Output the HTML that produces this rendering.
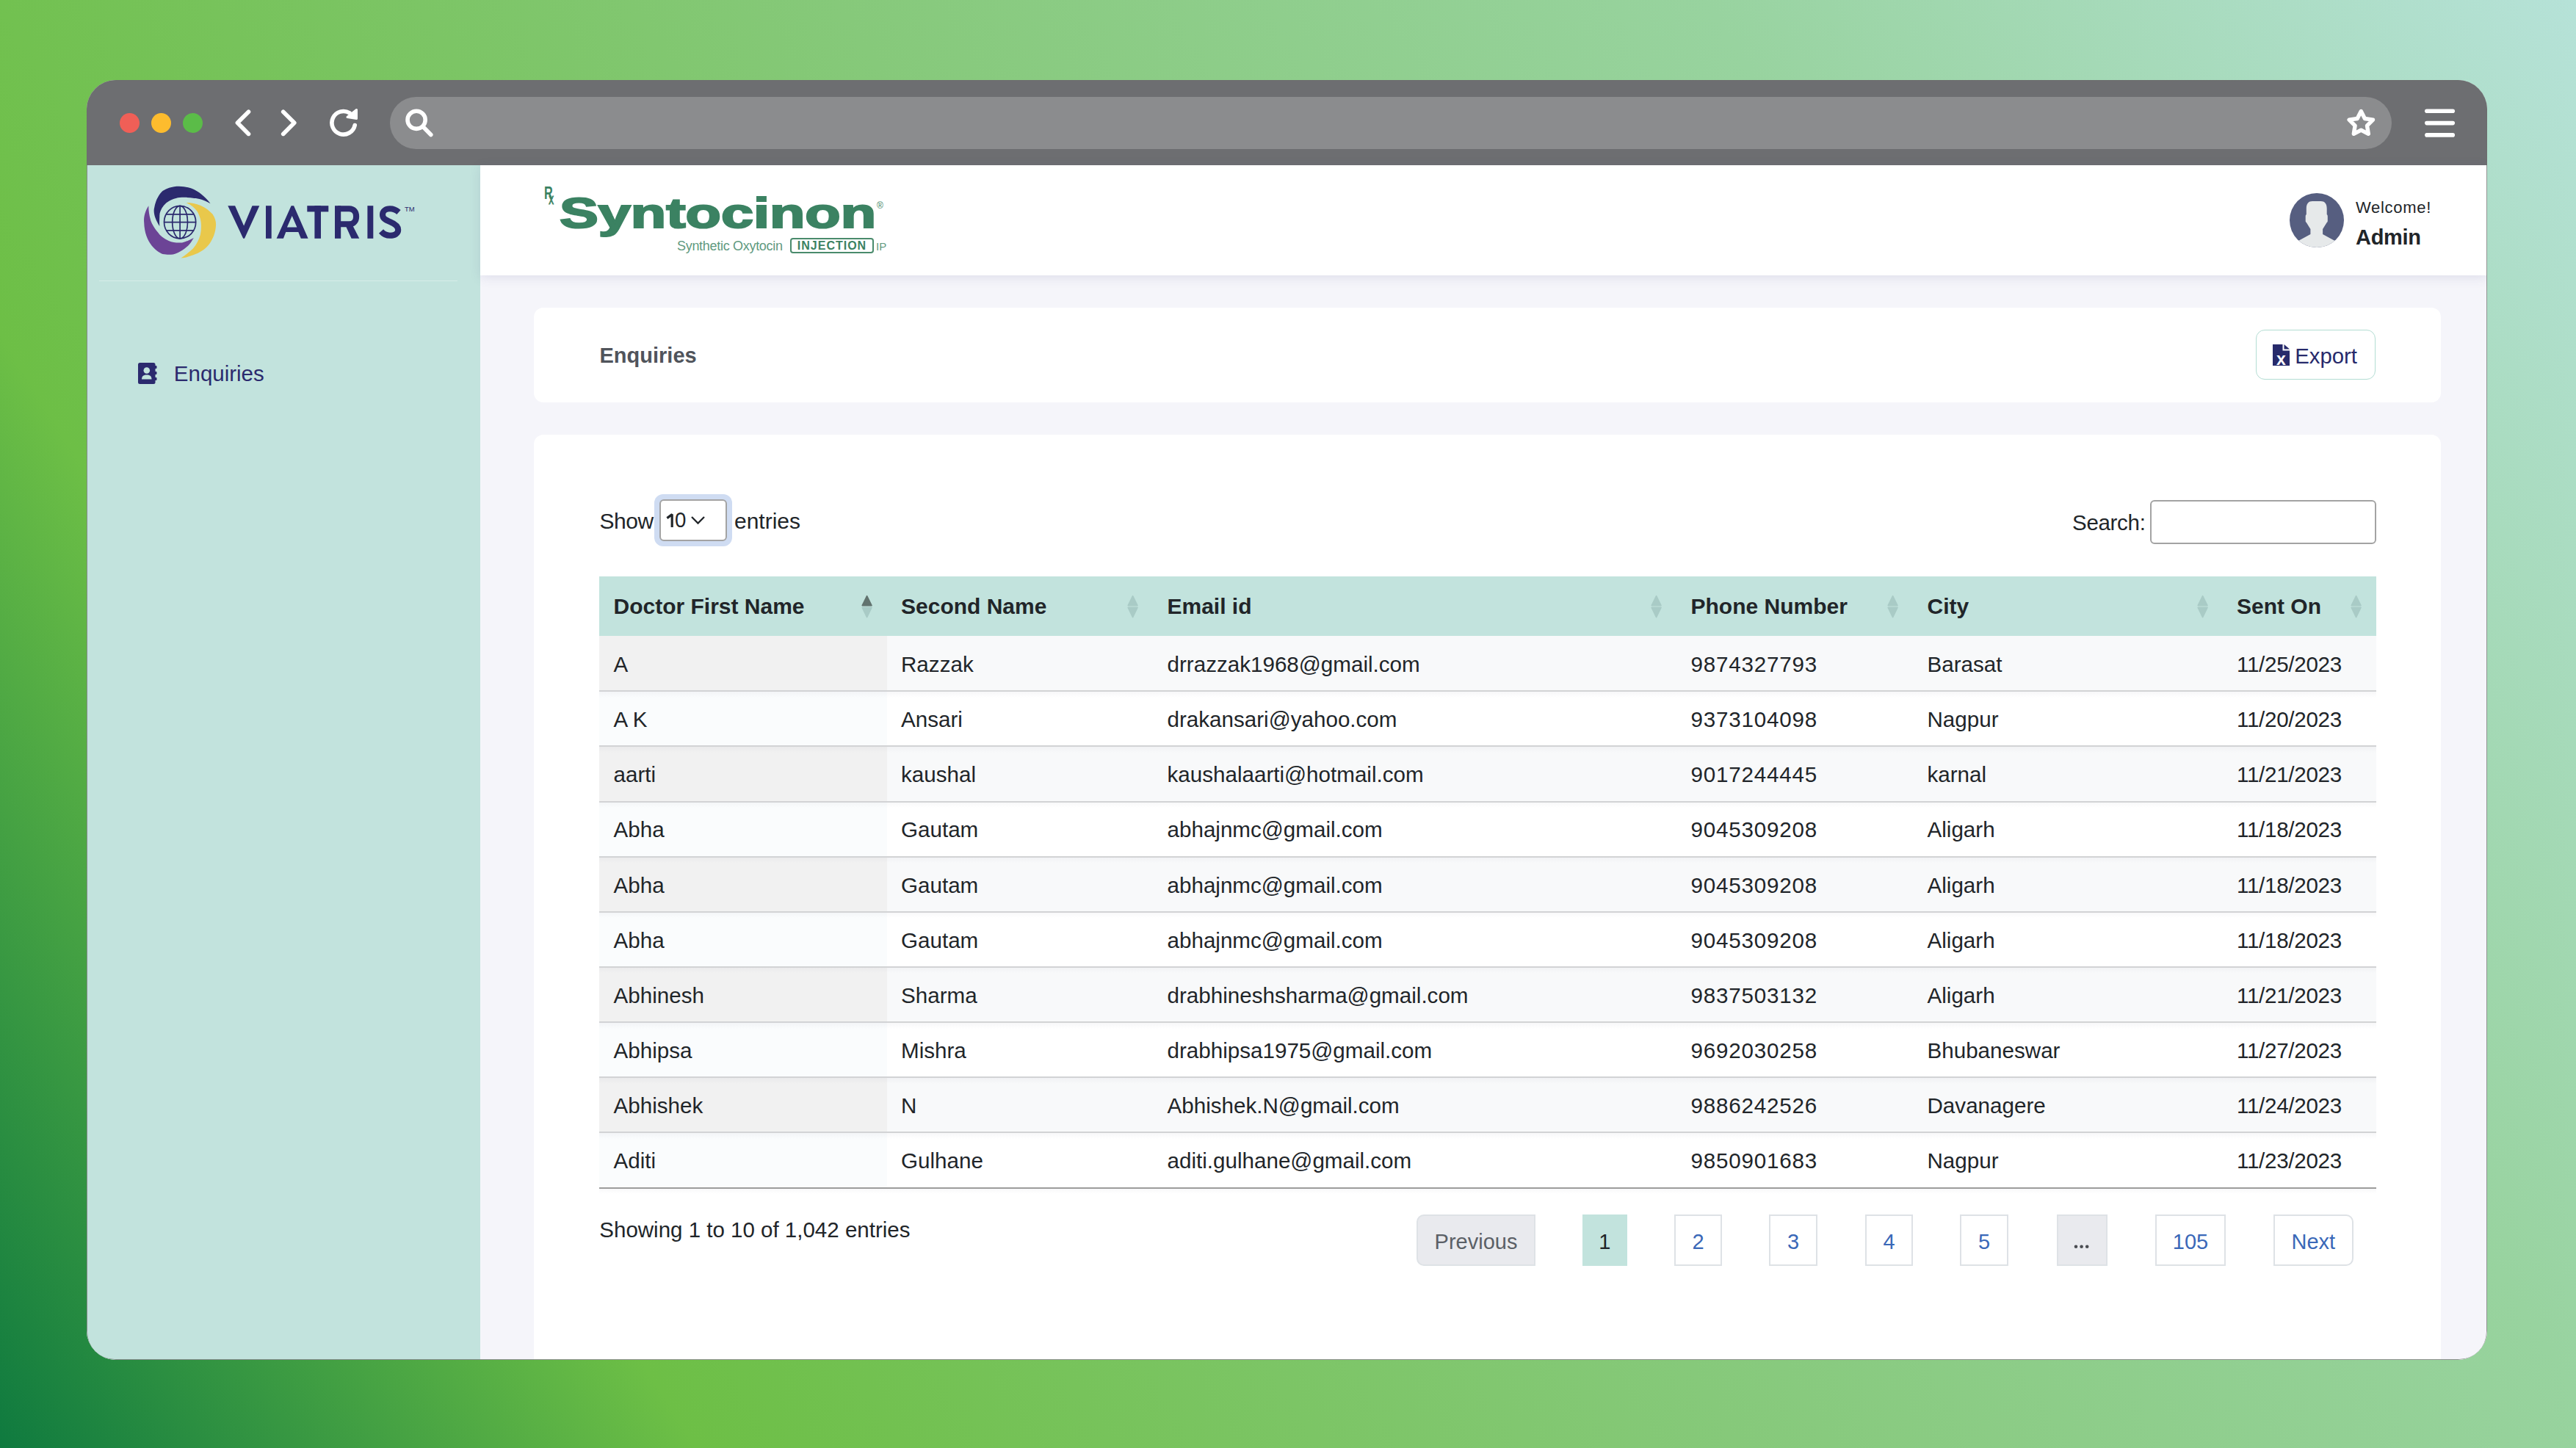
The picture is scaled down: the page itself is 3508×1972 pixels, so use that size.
<!DOCTYPE html>
<html><head><meta charset="utf-8"><style>
html,body{margin:0;padding:0;width:3508px;height:1972px;overflow:hidden}
body{background:linear-gradient(58deg,#0f7a3f 0%,#6dbf46 20%,#86c97a 50%,#98d39f 75%,#b6e2d8 100%);font-family:'Liberation Sans', sans-serif;position:relative}
.abs{position:absolute}
.t{position:absolute;white-space:nowrap}
#win{position:absolute;left:118px;top:109px;width:3269px;height:1743px;border-radius:40px;overflow:hidden;background:#f5f5fa}
#win > *{}
#bar{position:absolute;left:118px;top:109px;width:3269px;height:116px;background:#6d6e71}
.dot{position:absolute;width:27px;height:27px;border-radius:50%}

#inner{position:absolute;left:-118px;top:-109px;width:3508px;height:1972px}
#addr{position:absolute;left:531px;top:132px;width:2726px;height:71px;border-radius:36px;background:#8b8c8e}
#side{position:absolute;left:118px;top:225px;width:536px;height:1650px;background:#c2e3dd}
#main{position:absolute;left:654px;top:225px;width:2733px;height:1650px;background:#f5f5fa}
#hdr{position:absolute;left:654px;top:225px;width:2733px;height:150px;background:#fff;box-shadow:0 3px 14px rgba(80,80,140,0.13)}
.card{position:absolute;background:#fff;border-radius:13px}
#viatris{left:310px;top:270px;font-size:65px;line-height:65px;font-weight:700;color:#2a2a6a;letter-spacing:1px;transform-origin:0 0;transform:scaleX(0.925)}
#tm{left:550px;top:280px;font-size:11px;line-height:11px;font-weight:700;color:#2a2a6a}
#rx{left:741px;top:251px;font-size:24px;line-height:24px;font-weight:700;color:#3b8262;transform-origin:0 0;transform:scaleX(0.68)}
#rx span{font-size:20px;font-weight:400;-webkit-text-stroke:0.8px #3b8262;position:relative;left:-8px;top:7px}
#synto{left:762px;top:261px;font-size:58px;line-height:58px;font-weight:700;color:#3b8262;transform-origin:0 0;transform:scaleX(1.365);-webkit-text-stroke:2.2px #3b8262}
#reg{left:1194px;top:274px;font-size:12px;line-height:12px;color:#3b8262}
#synth{left:922px;top:326px;font-size:18px;line-height:18px;color:#5f9a80;letter-spacing:-0.3px}
#inj{left:1076px;top:324px;width:110px;height:17px;border:2px solid #4a8b6c;border-radius:4px;font-size:16px;line-height:17px;font-weight:700;color:#3b8262;text-align:center;letter-spacing:1px}
#ip{left:1193px;top:328px;font-size:15px;line-height:15px;color:#5f9a80}
#export{left:3072px;top:449px;width:161px;height:66px;border:1.5px solid #b3ddd3;border-radius:12px}
#selring{left:891px;top:673px;width:105.5px;height:71px;border-radius:12px;background:#cfdcf2}
#sel{left:898px;top:680.4px;width:88px;height:52.5px;border:2px solid #a3a3a3;border-radius:6px;background:#fff}
#search{left:2927.5px;top:680.5px;width:304px;height:56px;border:2px solid #a3a3a3;border-radius:6px;background:#fff}
.pg{position:absolute;top:1654px;height:66px;border:2px solid #dee2e6;background:#fff;color:#3a68b8;font-size:29px;line-height:66px;text-align:center;box-sizing:content-box}
.pg{box-sizing:border-box;height:70px;line-height:70px}
.pg.prev{background:#e9eaee;color:#5b6066;border-radius:10px 0 0 10px}
.pg.act{background:#c2e3dd;border-color:#c2e3dd;color:#212529}
.pg.dis{background:#e9eaee;color:#444}
.pg.next{border-radius:0 10px 10px 0}
</style></head><body>
<div id="win"><div id="inner">
<div id="bar"></div>
<div class="dot" style="left:162.5px;top:153.5px;background:#f05f57"></div>
<div class="dot" style="left:205.5px;top:153.5px;background:#fdbc2e"></div>
<div class="dot" style="left:248.5px;top:153.5px;background:#5bbc48"></div>
<div id="addr"></div>
<svg class="abs" style="left:0;top:0" width="3508" height="240"><g fill="none" stroke="#fff" stroke-width="5.6" stroke-linecap="round" stroke-linejoin="round"><polyline points="338.5,152.2 323.4,167.3 338.5,182.4"/><polyline points="385.7,152.2 400.8,167.3 385.7,182.4"/><path d="M483.2,170.6 A15.8,15.8 0 1 1 476.1,153.9"/><circle cx="567.1" cy="163.3" r="12.1"/><line x1="577.5" y1="174" x2="586.8" y2="183.5"/><path d="M3215.3,151.5 L3220.4,161.5 L3231.5,163.2 L3223.5,171.2 L3225.3,182.3 L3215.3,177.1 L3205.3,182.3 L3207.1,171.2 L3199.1,163.2 L3210.2,161.5 Z" stroke-width="5.4"/></g><g fill="#fff"><path d="M473,159.5 L485.5,149.5 L485.5,161.5 Z" stroke="#fff" stroke-width="3" stroke-linejoin="round"/><rect x="3302" y="148.5" width="41" height="5.6" rx="2.8"/><rect x="3302" y="164.8" width="41" height="5.6" rx="2.8"/><rect x="3302" y="181.1" width="41" height="5.6" rx="2.8"/></g></svg>
<div id="side"></div>
<svg class="abs" style="left:190px;top:245px" width="120" height="120" viewBox="0 0 120 120"><path fill="#2b2a6e" d="M27.3,63 C22,55 18,45 20.3,37.3 C22,27 27,19 31.5,14.9 C40,10 47,8.7 53.9,8.7 C63,9 70,11 74.6,13.3 C84,18 92,26 96.5,32.3 C88,27 80,24.9 74.6,24.9 C64,23.5 56,23.5 49.7,24.9 C42,27 37,30 33.1,34.8 C29,40 27,45 27.3,49.7 C27,55 27,59 27.3,63 Z"/><path fill="#6c4496" d="M12.4,35.2 C7,43 5.5,52 6.2,58 C6.5,72 11,82 16.6,89.5 C22,96 27,99 31.5,101.1 C37,102 41,102 45.6,101.5 C53,100 60,95 66.3,89.5 C70,86 72,82 73.8,79.1 C68,82 63,84.5 58,85.4 C51,86 45,85 39.8,82.9 C33,80 28,76 24.9,71.3 C19,64 16,58 14.9,53.9 C13,47 12.2,41 12.4,35.2 Z"/><path fill="#e9c84b" d="M63.4,31.1 C70,31 77,32.5 82.9,34.8 C90,38 95,42 99.4,46.4 C103,52 104.5,57 104,62.2 C103.5,72 100,80 95.3,87 C90,94 84,98 76.2,101.1 C70,104 62,106 56.4,106.5 C63,102 68,98 72.9,93.6 C78,88 81,81 82.9,74.6 C84,69 84.2,63 83.7,58 C83,52 81,47 78.7,43.1 C75,38 70,34 63.4,31.1 Z"/><g fill="none" stroke="#2b2a6e" stroke-width="1.7"><ellipse cx="55.1" cy="57.6" rx="21.6" ry="22.2"/><ellipse cx="55.1" cy="57.6" rx="10.4" ry="22.2"/><line x1="55.1" y1="35.4" x2="55.1" y2="79.8"/><line x1="34" y1="57.6" x2="76.5" y2="57.6"/><line x1="36" y1="46.8" x2="74.2" y2="46.8"/><line x1="36" y1="68.8" x2="74.2" y2="68.8"/></g></svg>
<svg class="abs" style="left:300px;top:265px" width="280" height="75" viewBox="0 0 280 75"><g fill="#2b2a6e"><polygon points="10.3,15.2 20.1,15.2 32.1,42.4 43.5,15.2 53.3,15.2 33,59.8 31.2,59.8"/><rect x="62" y="15.2" width="7.7" height="44.6"/><path fill-rule="evenodd" d="M96.6,15.2 L100.1,15.2 L119.6,59.8 L109.8,59.8 L106.3,51.1 L89.3,51.1 L85.9,59.8 L76.6,59.8 Z M90.9,44.6 L104.4,44.6 L97.7,29 Z"/><rect x="118.3" y="15.2" width="29" height="8.2"/><rect x="128.4" y="15.2" width="8.6" height="44.6"/><rect x="156" y="15.2" width="8.2" height="44.6"/><polygon points="170.5,42 180.2,42 189.3,59.8 178.6,59.8"/><rect x="200.4" y="15.2" width="7.9" height="44.6"/></g><g fill="none" stroke="#2b2a6e" stroke-width="8.1"><path d="M160,19.3 L175.5,19.3 C182,19.3 185.1,24 185.1,29.9 C185.1,35.8 181.5,40.3 175.5,40.3 L160,40.3"/><path d="M243,24 C239,20.5 235,19.3 231,19.3 C225,19.3 221,22.5 221,27.5 C221,33 226,35 231.5,37.2 C237.5,39.6 242.2,42.3 242.2,48 C242.2,53 237.5,55.8 231,55.8 C226,55.8 222,53.5 219,50"/></g><text x="251" y="23" font-family="Liberation Sans" font-size="9.5" fill="#2b2a6e">TM</text></svg>
<div class="abs" style="left:135px;top:381.5px;width:488px;height:1.5px;background:#d6ede8"></div>
<svg class="abs" style="left:187px;top:493px" width="28" height="31" viewBox="0 0 28 31"><rect x="1" y="1" width="23.5" height="29" rx="2.5" fill="#2b2a6e"/><rect x="23" y="5" width="3.5" height="4" rx="1" fill="#2b2a6e"/><rect x="23" y="13" width="3.5" height="4" rx="1" fill="#2b2a6e"/><rect x="23" y="21" width="3.5" height="4" rx="1" fill="#2b2a6e"/><circle cx="12.8" cy="11.5" r="4.3" fill="#c2e3dd"/><path d="M6,23.5 C6,19 9,17.5 12.8,17.5 C16.5,17.5 19.5,19 19.5,23.5 Z" fill="#c2e3dd"/></svg>
<div class="t" style="left:236.8px;top:494.2px;font-size:29.5px;line-height:29.5px;font-weight:400;color:#2b2a6e;">Enquiries</div>
<div id="main"></div>
<div id="hdr"></div>
<div class="t" id="rx">R<span>x</span></div>
<div class="t" id="synto">Syntocinon</div>
<div class="t" id="reg">&reg;</div>
<div class="t" id="synth">Synthetic Oxytocin</div>
<div class="abs" id="inj">INJECTION</div>
<div class="t" id="ip">IP</div>
<svg class="abs" style="left:3118px;top:263px" width="74" height="74" viewBox="0 0 74 74"><defs><clipPath id="cc"><circle cx="37" cy="37" r="37"/></clipPath></defs><circle cx="37" cy="37" r="37" fill="#565e80"/><g clip-path="url(#cc)" fill="#e6e9ea"><path d="M22.8,21 C22.8,14 26,11 31,11 L42.5,11 C47.5,11 50.7,14 50.7,21 L50.7,29.3 C51.5,29.5 51.8,30.5 51.8,32 L51.8,38 C51.8,39.2 51,39.9 50.7,39.9 L45.1,48.9 L45.1,56 L59.8,64 L74,71 L74,74 L0,74 L0,71 L13.7,64 L28.4,56 L28.4,48.9 L22.8,39.9 C22.5,39.9 21.7,39.2 21.7,38 L21.7,32 C21.7,30.5 22,29.5 22.8,29.3 Z"/></g></svg>
<div class="t" style="left:3208.0px;top:271.9px;font-size:22px;line-height:22px;font-weight:400;color:#212529;letter-spacing:0.7px">Welcome!</div>
<div class="t" style="left:3208.0px;top:308.5px;font-size:29px;line-height:29px;font-weight:700;color:#212529;letter-spacing:-0.3px">Admin</div>
<div class="card" style="left:727px;top:419px;width:2597px;height:129px"></div>
<div class="t" style="left:816.5px;top:470.4px;font-size:29px;line-height:29px;font-weight:700;color:#50545b;">Enquiries</div>
<div class="abs" id="export"></div>
<svg class="abs" style="left:3095px;top:469px" width="24" height="30" viewBox="0 0 24 30"><path d="M0,0 L13.5,0 L13.5,8.5 L23,8.5 L23,29 L0,29 Z" fill="#272a6b"/><path d="M15.5,0 L23,6.5 L15.5,6.5 Z" fill="#272a6b"/><text x="11.5" y="27.5" font-family="Liberation Sans" font-weight="700" font-size="23" fill="#fff" text-anchor="middle">x</text></svg>
<div class="t" style="left:3125.3px;top:470.4px;font-size:29.3px;line-height:29.3px;font-weight:400;color:#272a6b;">Export</div>
<div class="card" style="left:727px;top:592px;width:2597px;height:1400px"></div>
<div class="t" style="left:816.5px;top:694.6px;font-size:30px;line-height:30px;font-weight:400;color:#212529;letter-spacing:-0.5px">Show</div>
<div class="abs" id="selring"></div>
<div class="abs" id="sel"></div>
<svg class="abs" style="left:905px;top:695px" width="16" height="28"><path d="M3.4,10.6 L10.2,5.6 L10.2,23.1" fill="none" stroke="#212529" stroke-width="3.2" stroke-linejoin="bevel"/></svg>
<div class="t" style="left:918.5px;top:692.9px;font-size:30px;line-height:30px;font-weight:400;color:#212529;transform:scaleX(0.92);transform-origin:0 0">0</div>
<svg class="abs" style="left:938px;top:700px" width="26" height="18"><polyline points="4,4 12.5,12.5 21,4" fill="none" stroke="#212529" stroke-width="2.3"/></svg>
<div class="t" style="left:1000.0px;top:694.6px;font-size:30px;line-height:30px;font-weight:400;color:#212529;">entries</div>
<div class="t" style="left:2822.0px;top:697.0px;font-size:29.5px;line-height:29.5px;font-weight:400;color:#212529;letter-spacing:-0.3px">Search:</div>
<div class="abs" id="search"></div>
<div class="abs" style="left:816px;top:785px;width:2420.0px;height:81px;background:#c2e3dd"></div>
<div class="t" style="left:835.5px;top:811.0px;font-size:30px;line-height:30px;font-weight:700;color:#212529;">Doctor First Name</div>
<svg class="abs" style="left:1172.8px;top:810px" width="16" height="33" viewBox="0 0 16 33"><path d="M7.6,1.6 L14,14.6 L1.2,14.6 Z" fill="#62736f" stroke="#62736f" stroke-width="1.6" stroke-linejoin="round"/><path d="M1.2,17.4 L14,17.4 L7.6,30.6 Z" fill="#a9cbc6" stroke="#a9cbc6" stroke-width="1.6" stroke-linejoin="round"/></svg>
<div class="t" style="left:1227.0px;top:811.0px;font-size:30px;line-height:30px;font-weight:700;color:#212529;">Second Name</div>
<svg class="abs" style="left:1535.3px;top:810px" width="16" height="33" viewBox="0 0 16 33"><path d="M7.6,1.6 L14,14.6 L1.2,14.6 Z" fill="#a9cbc6" stroke="#a9cbc6" stroke-width="1.6" stroke-linejoin="round"/><path d="M1.2,17.4 L14,17.4 L7.6,30.6 Z" fill="#a9cbc6" stroke="#a9cbc6" stroke-width="1.6" stroke-linejoin="round"/></svg>
<div class="t" style="left:1589.5px;top:811.0px;font-size:30px;line-height:30px;font-weight:700;color:#212529;">Email id</div>
<svg class="abs" style="left:2248.3px;top:810px" width="16" height="33" viewBox="0 0 16 33"><path d="M7.6,1.6 L14,14.6 L1.2,14.6 Z" fill="#a9cbc6" stroke="#a9cbc6" stroke-width="1.6" stroke-linejoin="round"/><path d="M1.2,17.4 L14,17.4 L7.6,30.6 Z" fill="#a9cbc6" stroke="#a9cbc6" stroke-width="1.6" stroke-linejoin="round"/></svg>
<div class="t" style="left:2302.5px;top:811.0px;font-size:30px;line-height:30px;font-weight:700;color:#212529;">Phone Number</div>
<svg class="abs" style="left:2570.3px;top:810px" width="16" height="33" viewBox="0 0 16 33"><path d="M7.6,1.6 L14,14.6 L1.2,14.6 Z" fill="#a9cbc6" stroke="#a9cbc6" stroke-width="1.6" stroke-linejoin="round"/><path d="M1.2,17.4 L14,17.4 L7.6,30.6 Z" fill="#a9cbc6" stroke="#a9cbc6" stroke-width="1.6" stroke-linejoin="round"/></svg>
<div class="t" style="left:2624.5px;top:811.0px;font-size:30px;line-height:30px;font-weight:700;color:#212529;">City</div>
<svg class="abs" style="left:2991.8px;top:810px" width="16" height="33" viewBox="0 0 16 33"><path d="M7.6,1.6 L14,14.6 L1.2,14.6 Z" fill="#a9cbc6" stroke="#a9cbc6" stroke-width="1.6" stroke-linejoin="round"/><path d="M1.2,17.4 L14,17.4 L7.6,30.6 Z" fill="#a9cbc6" stroke="#a9cbc6" stroke-width="1.6" stroke-linejoin="round"/></svg>
<div class="t" style="left:3046.0px;top:811.0px;font-size:30px;line-height:30px;font-weight:700;color:#212529;">Sent On</div>
<svg class="abs" style="left:3201.3px;top:810px" width="16" height="33" viewBox="0 0 16 33"><path d="M7.6,1.6 L14,14.6 L1.2,14.6 Z" fill="#a9cbc6" stroke="#a9cbc6" stroke-width="1.6" stroke-linejoin="round"/><path d="M1.2,17.4 L14,17.4 L7.6,30.6 Z" fill="#a9cbc6" stroke="#a9cbc6" stroke-width="1.6" stroke-linejoin="round"/></svg>
<div class="abs" style="left:816px;top:866.0px;width:2420.0px;height:75.2px;background:#f8f9fa"></div>
<div class="abs" style="left:816px;top:866.0px;width:391.5px;height:75.2px;background:#f1f1f1"></div>
<div class="abs" style="left:816px;top:941.1px;width:2420.0px;height:75.2px;background:#ffffff"></div>
<div class="abs" style="left:816px;top:941.1px;width:391.5px;height:75.2px;background:#fafcfd"></div>
<div class="abs" style="left:816px;top:1016.3px;width:2420.0px;height:75.2px;background:#f8f9fa"></div>
<div class="abs" style="left:816px;top:1016.3px;width:391.5px;height:75.2px;background:#f1f1f1"></div>
<div class="abs" style="left:816px;top:1091.5px;width:2420.0px;height:75.2px;background:#ffffff"></div>
<div class="abs" style="left:816px;top:1091.5px;width:391.5px;height:75.2px;background:#fafcfd"></div>
<div class="abs" style="left:816px;top:1166.6px;width:2420.0px;height:75.2px;background:#f8f9fa"></div>
<div class="abs" style="left:816px;top:1166.6px;width:391.5px;height:75.2px;background:#f1f1f1"></div>
<div class="abs" style="left:816px;top:1241.8px;width:2420.0px;height:75.2px;background:#ffffff"></div>
<div class="abs" style="left:816px;top:1241.8px;width:391.5px;height:75.2px;background:#fafcfd"></div>
<div class="abs" style="left:816px;top:1316.9px;width:2420.0px;height:75.2px;background:#f8f9fa"></div>
<div class="abs" style="left:816px;top:1316.9px;width:391.5px;height:75.2px;background:#f1f1f1"></div>
<div class="abs" style="left:816px;top:1392.1px;width:2420.0px;height:75.2px;background:#ffffff"></div>
<div class="abs" style="left:816px;top:1392.1px;width:391.5px;height:75.2px;background:#fafcfd"></div>
<div class="abs" style="left:816px;top:1467.2px;width:2420.0px;height:75.2px;background:#f8f9fa"></div>
<div class="abs" style="left:816px;top:1467.2px;width:391.5px;height:75.2px;background:#f1f1f1"></div>
<div class="abs" style="left:816px;top:1542.3px;width:2420.0px;height:75.2px;background:#ffffff"></div>
<div class="abs" style="left:816px;top:1542.3px;width:391.5px;height:75.2px;background:#fafcfd"></div>
<div class="abs" style="left:816px;top:941.6px;width:2420.0px;height:8px;background:linear-gradient(rgba(40,40,80,0.035),rgba(40,40,80,0))"></div>
<div class="abs" style="left:816px;top:940.1px;width:2420.0px;height:2px;background:#d2d3d5"></div>
<div class="t" style="left:835.5px;top:889.9px;font-size:29.6px;line-height:29.6px;font-weight:400;color:#212529;">A</div>
<div class="t" style="left:1227.0px;top:889.9px;font-size:29.6px;line-height:29.6px;font-weight:400;color:#212529;">Razzak</div>
<div class="t" style="left:1589.5px;top:889.9px;font-size:29.6px;line-height:29.6px;font-weight:400;color:#212529;">drrazzak1968@gmail.com</div>
<div class="t" style="left:2302.5px;top:889.9px;font-size:29.6px;line-height:29.6px;font-weight:400;color:#212529;letter-spacing:0.8px">9874327793</div>
<div class="t" style="left:2624.5px;top:889.9px;font-size:29.6px;line-height:29.6px;font-weight:400;color:#212529;">Barasat</div>
<div class="t" style="left:3046.0px;top:889.9px;font-size:29.6px;line-height:29.6px;font-weight:400;color:#212529;letter-spacing:-0.3px">11/25/2023</div>
<div class="abs" style="left:816px;top:1016.8px;width:2420.0px;height:8px;background:linear-gradient(rgba(40,40,80,0.035),rgba(40,40,80,0))"></div>
<div class="abs" style="left:816px;top:1015.3px;width:2420.0px;height:2px;background:#d2d3d5"></div>
<div class="t" style="left:835.5px;top:965.1px;font-size:29.6px;line-height:29.6px;font-weight:400;color:#212529;">A K</div>
<div class="t" style="left:1227.0px;top:965.1px;font-size:29.6px;line-height:29.6px;font-weight:400;color:#212529;">Ansari</div>
<div class="t" style="left:1589.5px;top:965.1px;font-size:29.6px;line-height:29.6px;font-weight:400;color:#212529;">drakansari@yahoo.com</div>
<div class="t" style="left:2302.5px;top:965.1px;font-size:29.6px;line-height:29.6px;font-weight:400;color:#212529;letter-spacing:0.8px">9373104098</div>
<div class="t" style="left:2624.5px;top:965.1px;font-size:29.6px;line-height:29.6px;font-weight:400;color:#212529;">Nagpur</div>
<div class="t" style="left:3046.0px;top:965.1px;font-size:29.6px;line-height:29.6px;font-weight:400;color:#212529;letter-spacing:-0.3px">11/20/2023</div>
<div class="abs" style="left:816px;top:1092.0px;width:2420.0px;height:8px;background:linear-gradient(rgba(40,40,80,0.035),rgba(40,40,80,0))"></div>
<div class="abs" style="left:816px;top:1090.5px;width:2420.0px;height:2px;background:#d2d3d5"></div>
<div class="t" style="left:835.5px;top:1040.2px;font-size:29.6px;line-height:29.6px;font-weight:400;color:#212529;">aarti</div>
<div class="t" style="left:1227.0px;top:1040.2px;font-size:29.6px;line-height:29.6px;font-weight:400;color:#212529;">kaushal</div>
<div class="t" style="left:1589.5px;top:1040.2px;font-size:29.6px;line-height:29.6px;font-weight:400;color:#212529;">kaushalaarti@hotmail.com</div>
<div class="t" style="left:2302.5px;top:1040.2px;font-size:29.6px;line-height:29.6px;font-weight:400;color:#212529;letter-spacing:0.8px">9017244445</div>
<div class="t" style="left:2624.5px;top:1040.2px;font-size:29.6px;line-height:29.6px;font-weight:400;color:#212529;">karnal</div>
<div class="t" style="left:3046.0px;top:1040.2px;font-size:29.6px;line-height:29.6px;font-weight:400;color:#212529;letter-spacing:-0.3px">11/21/2023</div>
<div class="abs" style="left:816px;top:1167.1px;width:2420.0px;height:8px;background:linear-gradient(rgba(40,40,80,0.035),rgba(40,40,80,0))"></div>
<div class="abs" style="left:816px;top:1165.6px;width:2420.0px;height:2px;background:#d2d3d5"></div>
<div class="t" style="left:835.5px;top:1115.4px;font-size:29.6px;line-height:29.6px;font-weight:400;color:#212529;">Abha</div>
<div class="t" style="left:1227.0px;top:1115.4px;font-size:29.6px;line-height:29.6px;font-weight:400;color:#212529;">Gautam</div>
<div class="t" style="left:1589.5px;top:1115.4px;font-size:29.6px;line-height:29.6px;font-weight:400;color:#212529;">abhajnmc@gmail.com</div>
<div class="t" style="left:2302.5px;top:1115.4px;font-size:29.6px;line-height:29.6px;font-weight:400;color:#212529;letter-spacing:0.8px">9045309208</div>
<div class="t" style="left:2624.5px;top:1115.4px;font-size:29.6px;line-height:29.6px;font-weight:400;color:#212529;">Aligarh</div>
<div class="t" style="left:3046.0px;top:1115.4px;font-size:29.6px;line-height:29.6px;font-weight:400;color:#212529;letter-spacing:-0.3px">11/18/2023</div>
<div class="abs" style="left:816px;top:1242.2px;width:2420.0px;height:8px;background:linear-gradient(rgba(40,40,80,0.035),rgba(40,40,80,0))"></div>
<div class="abs" style="left:816px;top:1240.8px;width:2420.0px;height:2px;background:#d2d3d5"></div>
<div class="t" style="left:835.5px;top:1190.5px;font-size:29.6px;line-height:29.6px;font-weight:400;color:#212529;">Abha</div>
<div class="t" style="left:1227.0px;top:1190.5px;font-size:29.6px;line-height:29.6px;font-weight:400;color:#212529;">Gautam</div>
<div class="t" style="left:1589.5px;top:1190.5px;font-size:29.6px;line-height:29.6px;font-weight:400;color:#212529;">abhajnmc@gmail.com</div>
<div class="t" style="left:2302.5px;top:1190.5px;font-size:29.6px;line-height:29.6px;font-weight:400;color:#212529;letter-spacing:0.8px">9045309208</div>
<div class="t" style="left:2624.5px;top:1190.5px;font-size:29.6px;line-height:29.6px;font-weight:400;color:#212529;">Aligarh</div>
<div class="t" style="left:3046.0px;top:1190.5px;font-size:29.6px;line-height:29.6px;font-weight:400;color:#212529;letter-spacing:-0.3px">11/18/2023</div>
<div class="abs" style="left:816px;top:1317.4px;width:2420.0px;height:8px;background:linear-gradient(rgba(40,40,80,0.035),rgba(40,40,80,0))"></div>
<div class="abs" style="left:816px;top:1315.9px;width:2420.0px;height:2px;background:#d2d3d5"></div>
<div class="t" style="left:835.5px;top:1265.7px;font-size:29.6px;line-height:29.6px;font-weight:400;color:#212529;">Abha</div>
<div class="t" style="left:1227.0px;top:1265.7px;font-size:29.6px;line-height:29.6px;font-weight:400;color:#212529;">Gautam</div>
<div class="t" style="left:1589.5px;top:1265.7px;font-size:29.6px;line-height:29.6px;font-weight:400;color:#212529;">abhajnmc@gmail.com</div>
<div class="t" style="left:2302.5px;top:1265.7px;font-size:29.6px;line-height:29.6px;font-weight:400;color:#212529;letter-spacing:0.8px">9045309208</div>
<div class="t" style="left:2624.5px;top:1265.7px;font-size:29.6px;line-height:29.6px;font-weight:400;color:#212529;">Aligarh</div>
<div class="t" style="left:3046.0px;top:1265.7px;font-size:29.6px;line-height:29.6px;font-weight:400;color:#212529;letter-spacing:-0.3px">11/18/2023</div>
<div class="abs" style="left:816px;top:1392.6px;width:2420.0px;height:8px;background:linear-gradient(rgba(40,40,80,0.035),rgba(40,40,80,0))"></div>
<div class="abs" style="left:816px;top:1391.1px;width:2420.0px;height:2px;background:#d2d3d5"></div>
<div class="t" style="left:835.5px;top:1340.8px;font-size:29.6px;line-height:29.6px;font-weight:400;color:#212529;">Abhinesh</div>
<div class="t" style="left:1227.0px;top:1340.8px;font-size:29.6px;line-height:29.6px;font-weight:400;color:#212529;">Sharma</div>
<div class="t" style="left:1589.5px;top:1340.8px;font-size:29.6px;line-height:29.6px;font-weight:400;color:#212529;">drabhineshsharma@gmail.com</div>
<div class="t" style="left:2302.5px;top:1340.8px;font-size:29.6px;line-height:29.6px;font-weight:400;color:#212529;letter-spacing:0.8px">9837503132</div>
<div class="t" style="left:2624.5px;top:1340.8px;font-size:29.6px;line-height:29.6px;font-weight:400;color:#212529;">Aligarh</div>
<div class="t" style="left:3046.0px;top:1340.8px;font-size:29.6px;line-height:29.6px;font-weight:400;color:#212529;letter-spacing:-0.3px">11/21/2023</div>
<div class="abs" style="left:816px;top:1467.7px;width:2420.0px;height:8px;background:linear-gradient(rgba(40,40,80,0.035),rgba(40,40,80,0))"></div>
<div class="abs" style="left:816px;top:1466.2px;width:2420.0px;height:2px;background:#d2d3d5"></div>
<div class="t" style="left:835.5px;top:1416.0px;font-size:29.6px;line-height:29.6px;font-weight:400;color:#212529;">Abhipsa</div>
<div class="t" style="left:1227.0px;top:1416.0px;font-size:29.6px;line-height:29.6px;font-weight:400;color:#212529;">Mishra</div>
<div class="t" style="left:1589.5px;top:1416.0px;font-size:29.6px;line-height:29.6px;font-weight:400;color:#212529;">drabhipsa1975@gmail.com</div>
<div class="t" style="left:2302.5px;top:1416.0px;font-size:29.6px;line-height:29.6px;font-weight:400;color:#212529;letter-spacing:0.8px">9692030258</div>
<div class="t" style="left:2624.5px;top:1416.0px;font-size:29.6px;line-height:29.6px;font-weight:400;color:#212529;">Bhubaneswar</div>
<div class="t" style="left:3046.0px;top:1416.0px;font-size:29.6px;line-height:29.6px;font-weight:400;color:#212529;letter-spacing:-0.3px">11/27/2023</div>
<div class="abs" style="left:816px;top:1542.9px;width:2420.0px;height:8px;background:linear-gradient(rgba(40,40,80,0.035),rgba(40,40,80,0))"></div>
<div class="abs" style="left:816px;top:1541.4px;width:2420.0px;height:2px;background:#d2d3d5"></div>
<div class="t" style="left:835.5px;top:1491.1px;font-size:29.6px;line-height:29.6px;font-weight:400;color:#212529;">Abhishek</div>
<div class="t" style="left:1227.0px;top:1491.1px;font-size:29.6px;line-height:29.6px;font-weight:400;color:#212529;">N</div>
<div class="t" style="left:1589.5px;top:1491.1px;font-size:29.6px;line-height:29.6px;font-weight:400;color:#212529;">Abhishek.N@gmail.com</div>
<div class="t" style="left:2302.5px;top:1491.1px;font-size:29.6px;line-height:29.6px;font-weight:400;color:#212529;letter-spacing:0.8px">9886242526</div>
<div class="t" style="left:2624.5px;top:1491.1px;font-size:29.6px;line-height:29.6px;font-weight:400;color:#212529;">Davanagere</div>
<div class="t" style="left:3046.0px;top:1491.1px;font-size:29.6px;line-height:29.6px;font-weight:400;color:#212529;letter-spacing:-0.3px">11/24/2023</div>
<div class="abs" style="left:816px;top:1618.0px;width:2420.0px;height:8px;background:linear-gradient(rgba(40,40,80,0.035),rgba(40,40,80,0))"></div>
<div class="abs" style="left:816px;top:1616.5px;width:2420.0px;height:2px;background:#9c9c9c"></div>
<div class="t" style="left:835.5px;top:1566.3px;font-size:29.6px;line-height:29.6px;font-weight:400;color:#212529;">Aditi</div>
<div class="t" style="left:1227.0px;top:1566.3px;font-size:29.6px;line-height:29.6px;font-weight:400;color:#212529;">Gulhane</div>
<div class="t" style="left:1589.5px;top:1566.3px;font-size:29.6px;line-height:29.6px;font-weight:400;color:#212529;">aditi.gulhane@gmail.com</div>
<div class="t" style="left:2302.5px;top:1566.3px;font-size:29.6px;line-height:29.6px;font-weight:400;color:#212529;letter-spacing:0.8px">9850901683</div>
<div class="t" style="left:2624.5px;top:1566.3px;font-size:29.6px;line-height:29.6px;font-weight:400;color:#212529;">Nagpur</div>
<div class="t" style="left:3046.0px;top:1566.3px;font-size:29.6px;line-height:29.6px;font-weight:400;color:#212529;letter-spacing:-0.3px">11/23/2023</div>
<div class="t" style="left:816.3px;top:1660.3px;font-size:29.5px;line-height:29.5px;font-weight:400;color:#212529;">Showing 1 to 10 of 1,042 entries</div>
<div class="pg prev" style="left:1929px;width:162.0px">Previous</div>
<div class="pg act" style="left:2155px;width:60.6px">1</div>
<div class="pg " style="left:2280px;width:65.0px">2</div>
<div class="pg " style="left:2409.4px;width:65.5px">3</div>
<div class="pg " style="left:2540.2px;width:64.6px">4</div>
<div class="pg " style="left:2669.4px;width:65.6px">5</div>
<div class="pg dis" style="left:2800.5px;width:69.3px"></div>
<div class="pg " style="left:2935.3px;width:95.5px">105</div>
<div class="pg next" style="left:3096px;width:108.6px">Next</div>
<div class="abs" style="left:118px;top:109px;width:3269px;height:1743px;border-radius:38px;box-shadow:inset 0 0 0 1px rgba(110,110,110,0.75);z-index:5"></div>
<svg class="abs" style="left:2820px;top:1690px" width="30" height="16"><g fill="#4a4d52"><circle cx="7" cy="7.8" r="2.3"/><circle cx="14.6" cy="7.8" r="2.3"/><circle cx="22.2" cy="7.8" r="2.3"/></g></svg>
</div></div>
</body></html>
